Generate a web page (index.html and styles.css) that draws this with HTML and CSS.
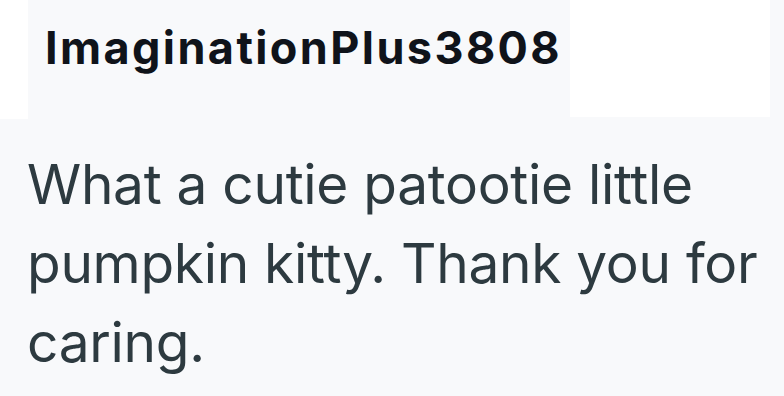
FILE: index.html
```html
<!DOCTYPE html>
<html lang="en">
<head>
    <meta charset="UTF-8">
    <meta name="viewport" content="width=device-width, initial-scale=1.0">
    <title>Comment</title>
    <link rel="stylesheet" href="styles.css">
</head>
<body>
    <div class="commentHeader">
        <div class="gutter"></div>
        <div class="author">ImaginationPlus3808</div>
        <div class="blank"></div>
    </div>
    <p class="commentBody">What a cutie patootie little pumpkin kitty. Thank you for caring.</p>
</body>
</html>
```

FILE: styles.css
```css
body {
    font-family: Inter, "Noto Sans", sans-serif;
    margin: 0;
    padding: 0;
    background-color: #f8f9fb;
    height: 100vh;
    overflow: hidden;
}
.commentHeader {
    display: flex;
    align-items: flex-start;
}
.gutter {
    width: 28px;
    height: 119px;
    background-color: #fff;
}
.author {
    width: 525px;
    height: 98px;
    padding: 21px 0 0 17px;
    font-size: 45px;
    font-weight: 700;
    line-height: 54px;
    letter-spacing: 2.4px;
    color: #0f131a;
}
.blank {
    width: 200px;
    height: 117px;
    background-color: #fff;
}
.commentBody {
    margin: 26px 0 0 0;
    padding: 0 0 0 27px;
    font-size: 55px;
    line-height: 79px;
    letter-spacing: -0.3px;
    color: #2d3a40;
}
```
